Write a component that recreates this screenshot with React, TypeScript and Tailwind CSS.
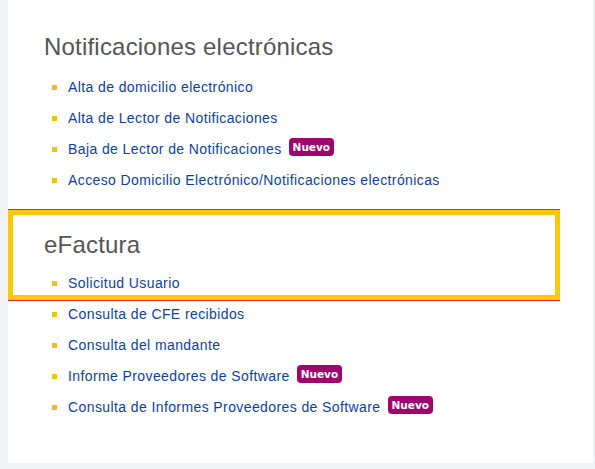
import React from "react";

type Item = { label: string; nuevo?: boolean };

const notificaciones: Item[] = [
  { label: "Alta de domicilio electrónico" },
  { label: "Alta de Lector de Notificaciones" },
  { label: "Baja de Lector de Notificaciones", nuevo: true },
  { label: "Acceso Domicilio Electrónico/Notificaciones electrónicas" },
];

const efactura: Item[] = [
  { label: "Solicitud Usuario" },
  { label: "Consulta de CFE recibidos" },
  { label: "Consulta del mandante" },
  { label: "Informe Proveedores de Software", nuevo: true },
  { label: "Consulta de Informes Proveedores de Software", nuevo: true },
];

function Badge() {
  return (
    <span className="ml-[7px] mt-[-1px] flex h-[18px] items-center rounded-[4px] bg-[#a0056e] px-[4px] font-['DejaVu_Sans',sans-serif] text-[10.5px] font-bold leading-none tracking-normal text-white">
      Nuevo
    </span>
  );
}

function List({ items }: { items: Item[] }) {
  return (
    <ul className="flex flex-col gap-[11px] pl-[44px]">
      {items.map((it) => (
        <li key={it.label} className="flex h-[20px] items-start text-[14px] leading-[20px] text-[#0b3fa8]">
          <span className="mt-[8px] mr-[11px] h-[5px] w-[5px] shrink-0 bg-[#f7c200]" />
          <a href="#" className="whitespace-nowrap tracking-[0.4px]">{it.label}</a>
          {it.nuevo && <Badge />}
        </li>
      ))}
    </ul>
  );
}

export default function App() {
  return (
    <div className="h-[469px] w-[595px] bg-[#f2f3f5] pl-[8px] pr-[2px] font-['Liberation_Sans',Arial,sans-serif]">
      <div className="h-[463px] bg-white pt-[34px]">
        <section>
          <h2 className="pl-[36px] text-[24px] leading-[26px] tracking-[0.2px] text-[#555555]">Notificaciones electrónicas</h2>
          <div className="mt-[17px]">
            <List items={notificaciones} />
          </div>
        </section>
        <section className="relative mt-[19px] pt-[23px]">
          <h2 className="pl-[36px] text-[24px] leading-[26px] tracking-[0.2px] text-[#555555]">eFactura</h2>
          <div className="mt-[15px]">
            <List items={efactura} />
          </div>
          <div className="pointer-events-none absolute left-0 top-0 h-[92px] w-[552px] border-y border-[#e5262a]">
            <div className="h-full w-full border-[5px] border-[#fcc80a]" />
          </div>
        </section>
      </div>
    </div>
  );
}
